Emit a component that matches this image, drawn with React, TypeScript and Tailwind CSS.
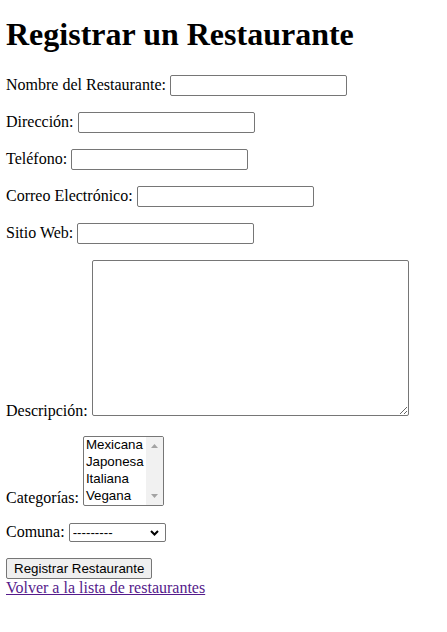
import React from 'react';

const CATEGORIAS = ['Mexicana', 'Japonesa', 'Italiana', 'Vegana'];

const inputClass =
  "h-[21px] w-[177px] rounded-[2px] border border-[#767676] bg-white px-[2px] py-[1px] font-['Liberation_Sans',Arial,sans-serif] text-[13.333px] leading-[normal] align-baseline";

const Field: React.FC<{ id: string; label: string; type?: string }> = ({ id, label, type = 'text' }) => (
  <p className="mt-4">
    <label htmlFor={id}>{label}</label>{' '}
    <input id={id} name={id} type={type} className={inputClass} />
  </p>
);

const App: React.FC = () => {
  return (
    <div className="min-h-screen bg-white px-[6px] py-2 font-['Liberation_Serif','Times_New_Roman',serif] text-base leading-[normal] text-black">
      <h1 className="mt-2 mb-[22px] text-[32px] font-bold leading-[normal]">Registrar un Restaurante</h1>

      <form>
        <p>
          <label htmlFor="nombre">Nombre del Restaurante:</label>{' '}
          <input id="nombre" name="nombre" type="text" className={inputClass} />
        </p>
        <Field id="direccion" label="Dirección:" />
        <Field id="telefono" label="Teléfono:" />
        <Field id="correo" label="Correo Electrónico:" type="email" />
        <Field id="sitio" label="Sitio Web:" type="url" />

        <p className="mt-4">
          <label htmlFor="descripcion">Descripción:</label>{' '}
          <textarea
            id="descripcion"
            name="descripcion"
            className="inline-block h-[156px] w-[317px] resize overflow-auto rounded-[2px] border border-[#767676] bg-white p-[2px] align-baseline font-['Liberation_Mono',monospace] text-[13.333px]"
          />
        </p>

        <p className="mt-4">
          <label>Categorías:</label>{' '}
          {/* listbox de 4 opciones, scrollbar deshabilitado */}
          <span className="inline-block h-[70px] w-[81px] overflow-hidden rounded-[2px] border border-[#767676] bg-white align-[-3px] font-['Liberation_Sans',Arial,sans-serif] text-[13.333px] leading-[normal]">
            <span className="flex h-full">
              <span className="flex flex-1 flex-col">
                {CATEGORIAS.map((c) => (
                  <span key={c} className="block h-[17px] px-[2px] pb-[1px] leading-[16px]">
                    {c}
                  </span>
                ))}
              </span>
              <span className="flex w-[17px] flex-col items-center justify-between bg-[#f1f1f1] py-[7px]">
                <svg width="7" height="4" viewBox="0 0 7 4">
                  <path d="M0 4 L3.5 0 L7 4 Z" fill="#a3a3a3" />
                </svg>
                <svg width="7" height="4" viewBox="0 0 7 4">
                  <path d="M0 0 L3.5 4 L7 0 Z" fill="#a3a3a3" />
                </svg>
              </span>
            </span>
          </span>
        </p>

        <p className="mt-4">
          <label htmlFor="comuna">Comuna:</label>{' '}
          <span className="relative inline-block align-baseline">
            <select
              id="comuna"
              name="comuna"
              className="h-[19px] w-[97px] appearance-none rounded-[2px] border border-[#767676] bg-white pl-[3px] font-['Liberation_Sans',Arial,sans-serif] text-[13.333px] leading-[normal]"
            >
              <option>---------</option>
            </select>
            <svg
              className="pointer-events-none absolute right-[7px] top-[7px]"
              width="9"
              height="6"
              viewBox="0 0 9 6"
            >
              <path d="M1 1 L4.5 4.5 L8 1" fill="none" stroke="#000" strokeWidth="2" />
            </svg>
          </span>
        </p>

        <div className="mt-4 h-[21px]">
          <button
            type="submit"
            className="h-[21px] rounded-[2px] border border-[#767676] bg-[#efefef] px-[7px] font-['Liberation_Sans',Arial,sans-serif] text-[13.333px] leading-[normal] text-black align-top"
          >
            Registrar Restaurante
          </button>
        </div>
      </form>
      <a href="#" className="text-[#551a8b] underline">
        Volver a la lista de restaurantes
      </a>
    </div>
  );
};

export default App;
